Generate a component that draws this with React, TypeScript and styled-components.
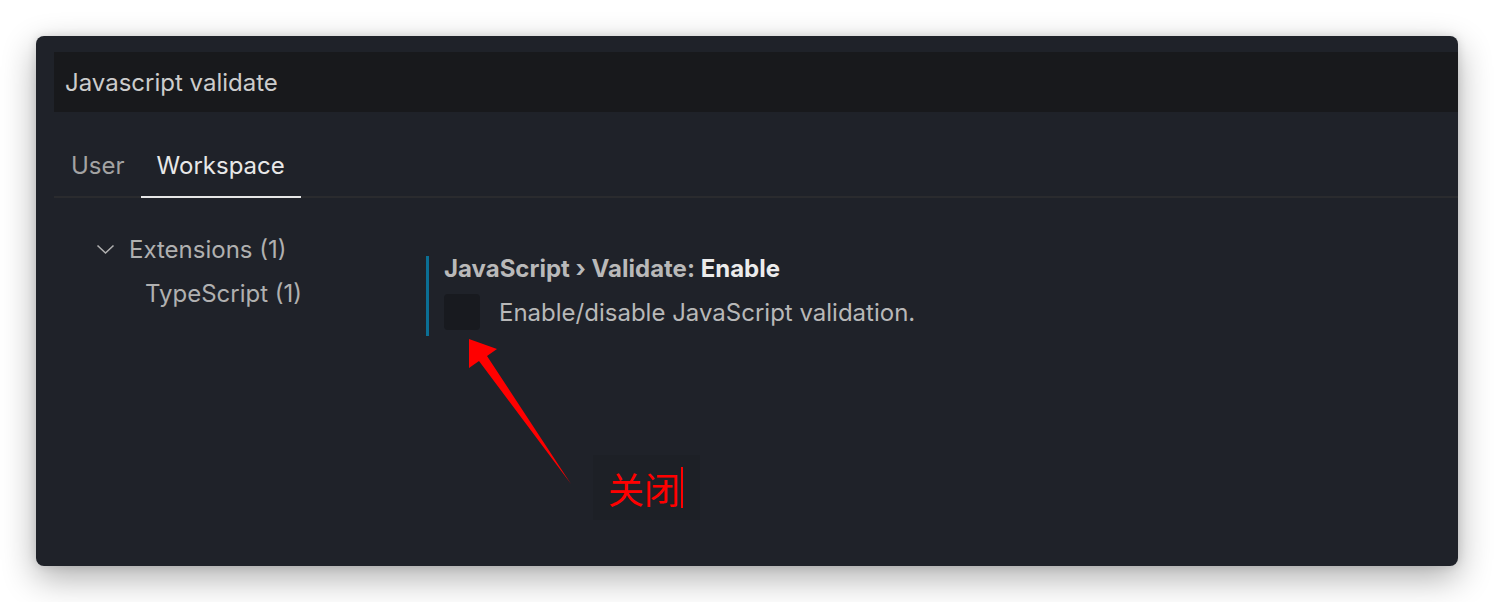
import React from "react";
import styled, { createGlobalStyle } from "styled-components";

const Global = createGlobalStyle`
  html, body { margin: 0; padding: 0; background: #ffffff; }
  body { font-family: Inter, "Open Sans", "Liberation Sans", sans-serif; }
`;

const Page = styled.div`
  width: 1494px;
  height: 602px;
  padding: 36px 36px 0 36px;
  box-sizing: border-box;
`;

const Window = styled.div`
  position: relative;
  width: 1422px;
  height: 530px;
  background: #1f2229;
  border-radius: 8px;
  box-shadow: 0 12px 34px rgba(0, 0, 0, 0.32), 0 0 10px rgba(0, 0, 0, 0.12);
  padding: 16px 0 0 18px;
  box-sizing: border-box;
  overflow: hidden;
`;

const SearchBar = styled.div`
  height: 60px;
  background: #18191c;
  display: flex;
  align-items: center;
  padding-left: 11px;
  font-size: 24px;
  color: #cccccc;
`;

const Tabs = styled.div`
  display: flex;
  height: 86px;
  border-bottom: 2px solid #2a2b2e;
  box-sizing: border-box;
`;

const Tab = styled.div<{ $active?: boolean }>`
  display: flex;
  align-items: flex-end;
  padding: 0 16px 13px 16px;
  margin-bottom: -2px;
  font-size: 24px;
  line-height: 34px;
  color: ${(p) => (p.$active ? "#e8e8e8" : "#a3a3a3")};
  border-bottom: 2px solid ${(p) => (p.$active ? "#e6e6e6" : "transparent")};

  &:first-child {
    padding-left: 17px;
  }
`;

const Body = styled.div`
  display: flex;
`;

const Tree = styled.div`
  width: 372px;
  padding: 29px 0 0 42px;
  box-sizing: border-box;
`;

const TreeRow = styled.div<{ $indent?: number }>`
  display: flex;
  align-items: center;
  height: 44px;
  gap: 14px;
  padding-left: ${(p) => p.$indent ?? 0}px;
  font-size: 24px;
  color: #b0b0b0;
`;

const Chevron = styled.svg`
  width: 19px;
  height: 19px;
  flex: none;
`;

const Setting = styled.div`
  margin-top: 58px;
  border-left: 3px solid #0b6f94;
  padding: 0 0 6px 15px;
  height: 80px;
  box-sizing: border-box;
`;

const Title = styled.div`
  font-size: 24px;
  line-height: 26px;
  font-weight: 700;
  color: #b9b9b9;
`;

const TitleKey = styled.span`
  color: #ececec;
`;

const ValueRow = styled.div`
  display: flex;
  align-items: center;
  gap: 19px;
  margin-top: 12px;
`;

const CheckBox = styled.div`
  width: 36px;
  height: 36px;
  border-radius: 4px;
  background: #181a1f;
`;

const Description = styled.div`
  font-size: 24px;
  color: #b8b8b8;
`;

const Arrow = styled.svg`
  position: absolute;
  left: 0;
  top: 0;
  width: 1422px;
  height: 530px;
  pointer-events: none;
`;

const Note = styled.div`
  position: absolute;
  left: 557px;
  top: 419px;
  width: 107px;
  height: 65px;
  background: #1d2026;
  display: flex;
  align-items: center;
  padding-left: 15px;
  box-sizing: border-box;
  font-family: "Noto Sans CJK SC", sans-serif;
  font-size: 36px;
  color: #ff0000;
`;

const Caret = styled.span`
  display: inline-block;
  width: 2px;
  height: 41px;
  background: #ff0000;
  margin-left: 1px;
`;

export default function App() {
  return (
    <>
      <Global />
      <Page>
        <Window>
          <SearchBar>Javascript validate</SearchBar>
          <Tabs>
            <Tab>User</Tab>
            <Tab $active>Workspace</Tab>
          </Tabs>
          <Body>
            <Tree>
              <TreeRow>
                <Chevron viewBox="0 0 19 19">
                  <polyline points="1.5,5.5 9.5,13 17.5,5.5" fill="none" stroke="#b0b0b0" strokeWidth="1.6" />
                </Chevron>
                Extensions (1)
              </TreeRow>
              <TreeRow $indent={49}>TypeScript (1)</TreeRow>
            </Tree>
            <Setting>
              <Title>
                JavaScript › Validate: <TitleKey>Enable</TitleKey>
              </Title>
              <ValueRow>
                <CheckBox />
                <Description>Enable/disable JavaScript validation.</Description>
              </ValueRow>
            </Setting>
          </Body>
          <Arrow viewBox="0 0 1422 530">
            <polygon
              points="433,303 461,313 451,320 535,448 443,325 433,332"
              fill="#ff0000"
            />
          </Arrow>
          <Note>
            关闭
            <Caret />
          </Note>
        </Window>
      </Page>
    </>
  );
}
